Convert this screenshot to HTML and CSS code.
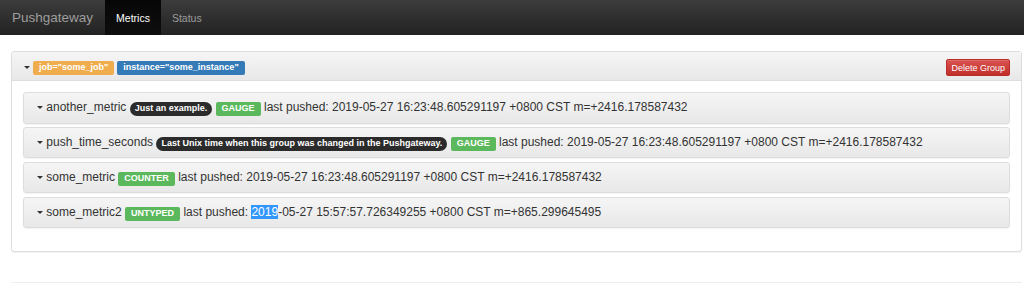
FILE: index.html
```
<!DOCTYPE html>
<html lang="en">
<head>
    <meta charset="UTF-8">
    <meta name="viewport" content="width=device-width, initial-scale=1.0">
    <title>Pushgateway</title>
    <link rel="stylesheet" href="styles.css">
</head>
<body>
    <nav class="navbar">
        <a class="navbar-brand" href="#">Pushgateway</a>
        <ul class="nav">
            <li class="active"><a href="#">Metrics</a></li>
            <li><a href="#">Status</a></li>
        </ul>
    </nav>

    <div class="container">
        <div class="panel group">
            <div class="group-heading">
                <div class="group-labels">
                    <span class="caret"></span>
                    <span class="label label-warning">job="some_job"</span>
                    <span class="label label-primary">instance="some_instance"</span>
                </div>
                <button class="btn-delete">Delete Group</button>
            </div>
            <div class="group-body">
                <div class="metric">
                    <h4 class="metric-title"><span class="caret"></span> another_metric <span class="badge">Just an example.</span> <span class="label label-success">GAUGE</span> last pushed: 2019-05-27 16:23:48.605291197 +0800 CST m=+2416.178587432</h4>
                </div>
                <div class="metric">
                    <h4 class="metric-title"><span class="caret"></span> push_time_seconds <span class="badge">Last Unix time when this group was changed in the Pushgateway.</span> <span class="label label-success">GAUGE</span> last pushed: 2019-05-27 16:23:48.605291197 +0800 CST m=+2416.178587432</h4>
                </div>
                <div class="metric">
                    <h4 class="metric-title"><span class="caret"></span> some_metric <span class="label label-success">COUNTER</span> last pushed: 2019-05-27 16:23:48.605291197 +0800 CST m=+2416.178587432</h4>
                </div>
                <div class="metric">
                    <h4 class="metric-title"><span class="caret"></span> some_metric2 <span class="label label-success">UNTYPED</span> last pushed: <span class="selected">2019</span>-05-27 15:57:57.726349255 +0800 CST m=+865.299645495</h4>
                </div>
            </div>
        </div>
        <hr>
    </div>
</body>
</html>
```

FILE: styles.css
```
body {
    margin: 0;
    font-family: "Liberation Sans", Arial, sans-serif;
    font-size: 10.5px;
    color: #333;
    background: #fff;
}
a {
    text-decoration: none;
}

/* navbar */
.navbar {
    display: flex;
    align-items: stretch;
    height: 35px;
    background: linear-gradient(to bottom, #3c3c3c 0%, #222 100%);
}
.navbar-brand {
    display: flex;
    align-items: center;
    padding: 0 12px 0 12px;
    font-size: 13.5px;
    color: #9d9d9d;
}
.nav {
    display: flex;
    margin: 0;
    padding: 0;
    list-style: none;
}
.nav li a {
    display: flex;
    align-items: center;
    height: 100%;
    padding: 0 11px;
    color: #9d9d9d;
}
.nav li.active a {
    color: #fff;
    background: linear-gradient(to bottom, #080808 0%, #0f0f0f 100%);
    box-shadow: inset 0 3px 9px rgba(0, 0, 0, .25);
}

/* page */
.container {
    padding: 16px 2px 0 11px;
}
.panel {
    border: 1px solid #ddd;
    border-radius: 3px;
    background: #fff;
    box-shadow: 0 1px 1px rgba(0, 0, 0, .05);
}
.group-heading {
    display: flex;
    justify-content: space-between;
    align-items: center;
    padding: 7px 11px 4px;
    border-bottom: 1px solid #ddd;
    border-radius: 3px 3px 0 0;
    background: linear-gradient(to bottom, #f5f5f5 0%, #e8e8e8 100%);
}
.group-labels {
    display: flex;
    align-items: center;
    gap: 3px;
}
.btn-delete {
    height: 17px;
    padding: 0 4px;
    font-family: inherit;
    font-size: 9px;
    color: #fff;
    border: 1px solid #b92c28;
    border-radius: 2px;
    background: linear-gradient(to bottom, #d9534f 0%, #c12e2a 100%);
    box-shadow: inset 0 1px 0 rgba(255, 255, 255, .15);
    cursor: pointer;
}
.group-body {
    padding: 11px 11px 23px;
}

/* metrics */
.metric {
    border: 1px solid #ddd;
    border-radius: 3px;
    background: linear-gradient(to bottom, #f5f5f5 0%, #e8e8e8 100%);
    box-shadow: 0 1px 1px rgba(0, 0, 0, .05);
}
.metric + .metric {
    margin-top: 3.4px;
}
.metric-title {
    height: 13px;
    margin: 0;
    padding: 8px 11px 8.5px 12px;
    font-size: 12px;
    font-weight: normal;
    line-height: 13px;
    white-space: nowrap;
}
.caret {
    display: inline-block;
    width: 0;
    height: 0;
    margin-left: 1px;
    vertical-align: middle;
    border-top: 3px solid #333;
    border-left: 3px solid transparent;
    border-right: 3px solid transparent;
}

/* labels */
.label {
    display: inline-block;
    padding: 2px 6px 3px;
    font-size: 9px;
    font-weight: bold;
    line-height: 9px;
    color: #fff;
    white-space: nowrap;
    vertical-align: 0;
    border-radius: 2px;
}
.label-warning {
    background: #f0ad4e;
}
.label-primary {
    background: #337ab7;
}
.label-success {
    background: #5cb85c;
}
.badge {
    display: inline-block;
    padding: 2px 5px 3px;
    font-size: 9px;
    font-weight: bold;
    line-height: 9px;
    color: #fff;
    white-space: nowrap;
    vertical-align: 0;
    border-radius: 7px;
    background: #2b2b2b;
}
.selected {
    color: #fff;
    background: #3297fd;
}

hr {
    margin: 30px 0 0;
    border: 0;
    border-top: 1px solid #eee;
}
```
